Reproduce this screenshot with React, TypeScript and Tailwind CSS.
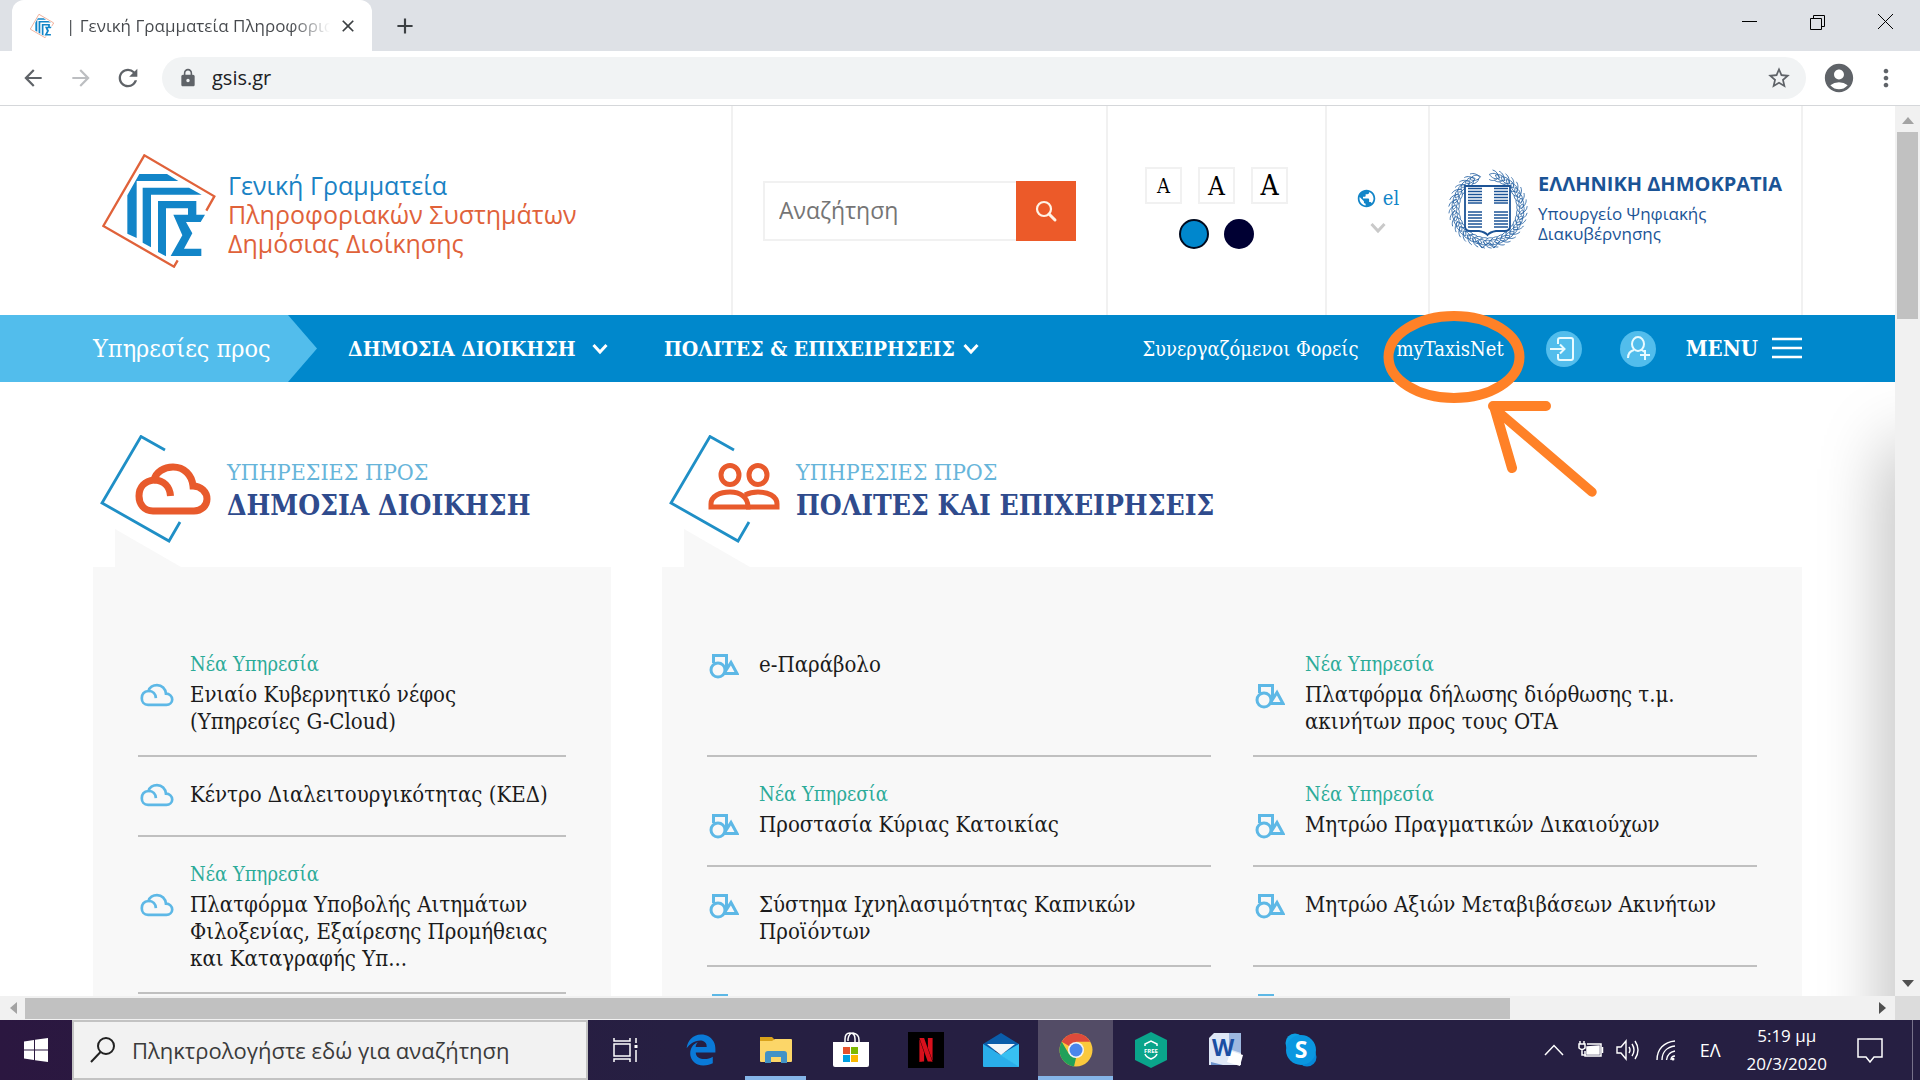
import type { ReactNode } from 'react';
import {
    MdAccountCircle,
    MdAdd,
    MdArrowBack,
    MdArrowForward,
    MdClose,
    MdLock,
    MdMoreVert,
    MdPublic,
    MdRefresh,
    MdStarBorder,
} from 'react-icons/md';
import { FaEdgeLegacy } from 'react-icons/fa6';
import { SiNetflix } from 'react-icons/si';

type Service = { title: string; isNew?: boolean };

const adminServices: Service[] = [
    { title: 'Ενιαίο Κυβερνητικό νέφος (Υπηρεσίες G-Cloud)', isNew: true },
    { title: 'Κέντρο Διαλειτουργικότητας (ΚΕΔ)' },
    { title: 'Πλατφόρμα Υποβολής Αιτημάτων Φιλοξενίας, Εξαίρεσης Προμήθειας και Καταγραφής Υπ...', isNew: true },
];

const citizenServices: Service[] = [
    { title: 'e-Παράβολο' },
    { title: 'Πλατφόρμα δήλωσης διόρθωσης τ.μ. ακινήτων προς τους ΟΤΑ', isNew: true },
    { title: 'Προστασία Κύριας Κατοικίας', isNew: true },
    { title: 'Μητρώο Πραγματικών Δικαιούχων', isNew: true },
    { title: 'Σύστημα Ιχνηλασιμότητας Καπνικών Προϊόντων' },
    { title: 'Μητρώο Αξιών Μεταβιβάσεων Ακινήτων' },
    { title: '' },
    { title: '' },
];

function GsisMark({ className }: { className: string }) {
    return (
        <svg viewBox="21 24 342 342" className={className} aria-hidden="true">
            <path d="M334 194 L358 151 L148 28 L25 240 L237 362 L248 343" fill="none" stroke="#e0623a" strokeWidth="7" />
            <g fill="#1285c8">
                <path d="M133 84 H216 L250 105 H125 V276 L97 263 V148 Z" />
                <path d="M143 125 H282 L320 146 H168 V304 L143 290 Z" />
                <path d="M189 165 H304 V206 H330 L317 228 H273 L292 262 L267 308 H319 V330 H227 L262 268 L235 206 H279 V187 H213 V331 L189 318 Z" />
            </g>
        </svg>
    );
}

function Emblem() {
    const leaves = Array.from({ length: 34 }, (_, i) => -78 + (i * 336) / 34 + 2);
    return (
        <svg viewBox="0 0 80 80" className="h-20 w-20 shrink-0" fill="none" stroke="#2c66a5" aria-hidden="true">
            <g strokeWidth="0.8">
                {leaves.map((a) => (
                    <g key={a} transform={`rotate(${a} 40 40)`}>
                        <path d="M73 44 C70 40 71 36 74 33 C77 37 77 41 73 44 Z" />
                        <path d="M73 43 C76 42 79 39 79 35 M72 42 C69 40 68 37 69 34" />
                    </g>
                ))}
            </g>
            <path d="M28 72 L34 79 L40 74 L46 79 L52 72" strokeWidth="1" />
            <path d="M17 17 H62 V57 Q62 62 57 62 H48 Q42 63 39.500 66 Q37 63 31 62 H22 Q17 62 17 57 Z" fill="#fff" stroke="#1d5496" strokeWidth="1.800" />
            <g stroke="#1d5496" strokeWidth="1.500">
                {[19.5, 22.5, 25.5, 28.5, 31.5, 34, 43, 46, 49, 52, 55, 58].map((y) => (
                    <path key={y} d={`M20 ${y} H34 M46 ${y} H60`} />
                ))}
            </g>
        </svg>
    );
}

function Chevron({ className }: { className: string }) {
    return (
        <svg viewBox="0 0 16 12" className={className} fill="none" stroke="currentColor" strokeWidth="3" aria-hidden="true">
            <path d="M1.500 2 L8 9 L14.500 2" />
        </svg>
    );
}

function CloudIcon({ className, strokeWidth }: { className: string; strokeWidth: number }) {
    return (
        <svg viewBox="0 0 76 52" className={className} fill="none" stroke="currentColor" strokeWidth={strokeWidth} aria-hidden="true">
            <path d="M18 48 C9 48 4 41 4 33 C4 24 10 18 19 17 C21 9 29 4 38 4 C49 4 57 12 58 23 C66 23 72 29 72 36 C72 43 66 48 59 48 Z" />
            <path d="M19 17 C29 17 35 24 35.500 33" />
        </svg>
    );
}

function ShapesIcon() {
    return (
        <svg viewBox="0 0 30 26" className="h-[26px] w-[30px]" fill="none" stroke="#5db8e6" strokeWidth="3" aria-hidden="true">
            <path d="M4.500 10 V2.500 H17.500 V16" />
            <path d="M15 20.500 L22 9.500 L28 20.500 Z" />
            <circle cx="9" cy="17" r="7" fill="#f8f8f8" />
        </svg>
    );
}

function PeopleIcon() {
    return (
        <svg viewBox="0 0 72 48" className="h-12 w-[72px]" fill="none" stroke="#e85a2c" strokeWidth="5" aria-hidden="true">
            <ellipse cx="22" cy="12" rx="9" ry="9.500" />
            <ellipse cx="50" cy="12" rx="9" ry="9.500" />
            <path d="M3 44 V41 C3 33 12 29 22 29 C32 29 40 34 40 44 Z" />
            <path d="M37 32 C41 30 45 29 50 29 C60 29 69 33 69 41 V44 H38" />
        </svg>
    );
}

function SectionHeading({ title, children }: { title: string; children: ReactNode }) {
    return (
        <div className="relative flex h-[132px] pl-2">
            <svg viewBox="0 0 120 132" className="absolute left-0 top-0 h-[132px] w-[120px]" fill="none" aria-hidden="true">
                <path d="M22 94 V132 H88 Z" fill="#f8f8f8" />
                <path d="M72 15 L48 1.500 L9 68 L76 106 L87 87" stroke="#1f8fc6" strokeWidth="2.800" />
            </svg>
            <div className="relative flex w-[126px] items-start justify-end pr-4 pt-7">{children}</div>
            <h2 className="pt-[22px] text-[#2f4b8d]">
                <span className="block text-[23px] font-light leading-[30px] text-[#67b5da]">ΥΠΗΡΕΣΙΕΣ ΠΡΟΣ</span>
                <span className="block text-[28px] font-bold leading-[38px]">{title}</span>
            </h2>
        </div>
    );
}

function ServiceRow({ service, icon }: { service: Service; icon: ReactNode }) {
    return (
        <li className="border-b-2 border-[#c0c0c0] pb-5 pt-6">
            <a href="#" className="block">
                {service.isNew && <span className="block pb-1 pl-[52px] text-[20px] leading-[26px] text-[#2cab98]">Νέα Υπηρεσία</span>}
                <span className="flex min-h-[34px]">
                    <span className="w-[52px] shrink-0 pl-0.5 pt-0.5">{icon}</span>
                    <span className="pr-2 leading-[27px]">{service.title}</span>
                </span>
            </a>
        </li>
    );
}

function BrowserChrome() {
    return (
        <header className="shrink-0 bg-white font-['Open_Sans',sans-serif]">
            <div className="flex h-[51px] bg-[#dee1e6] pl-3">
                <div className="flex w-[360px] items-center rounded-t-xl bg-white pl-[18px] pr-3.5">
                    <GsisMark className="h-6 w-6 shrink-0" />
                    <span className="ml-3 flex-1 overflow-hidden whitespace-nowrap bg-gradient-to-r from-[#45484c] from-85% to-white bg-clip-text text-[17px] text-transparent">
                        | Γενική Γραμματεία Πληροφορια
                    </span>
                    <button aria-label="Κλείσιμο καρτέλας" className="ml-2 text-[#3c4043]">
                        <MdClose size={20} />
                    </button>
                </div>
                <button aria-label="Νέα καρτέλα" className="ml-5 text-[#3c4043]">
                    <MdAdd size={26} />
                </button>
                <div className="ml-auto flex items-center gap-12 pb-2 pr-6 text-black">
                    <button aria-label="Ελαχιστοποίηση">
                        <svg viewBox="0 0 20 20" className="h-5 w-5" stroke="currentColor"><path d="M2 9.500 H17" /></svg>
                    </button>
                    <button aria-label="Επαναφορά">
                        <svg viewBox="0 0 20 20" className="h-5 w-5" fill="none" stroke="currentColor">
                            <path d="M2.500 6.500 H13.500 V17.500 H2.500 Z M5.500 6.500 V3.500 H16.500 V14.500 H13.500" />
                        </svg>
                    </button>
                    <button aria-label="Κλείσιμο">
                        <svg viewBox="0 0 20 20" className="h-5 w-5" stroke="currentColor"><path d="M2 2 L17 17 M17 2 L2 17" /></svg>
                    </button>
                </div>
            </div>
            <div className="flex h-[55px] items-center border-b border-[#d5d7da] pl-5 pr-5 text-[#5f6368]">
                <button aria-label="Πίσω"><MdArrowBack size={26} /></button>
                <button aria-label="Μπροστά" className="ml-[22px] text-[#bcbec1]"><MdArrowForward size={26} /></button>
                <button aria-label="Ανανέωση" className="ml-5"><MdRefresh size={28} /></button>
                <div className="ml-5 flex h-[42px] flex-1 items-center rounded-full bg-[#f1f3f4] pl-4 pr-3.5">
                    <MdLock size={20} />
                    <input aria-label="Διεύθυνση" defaultValue="gsis.gr" className="ml-3 flex-1 bg-transparent pl-0.5 text-xl text-[#202124] outline-none" />
                    <button aria-label="Σελιδοδείκτης"><MdStarBorder size={26} /></button>
                </div>
                <button aria-label="Προφίλ" className="ml-4"><MdAccountCircle size={34} /></button>
                <button aria-label="Μενού" className="ml-4"><MdMoreVert size={28} /></button>
            </div>
        </header>
    );
}

function SiteHeader() {
    return (
        <div className="mr-[92px] flex h-[209px] border-r-2 border-[#f1f1f1]">
            <a href="#" className="flex flex-1 items-center pl-[102px] font-['Open_Sans',sans-serif] text-[25px] leading-[29px] text-[#e0623a]">
                <GsisMark className="h-[114px] w-[114px] shrink-0" />
                <span className="pl-3 pt-2">
                    <span className="block text-[#1a82c4]">Γενική Γραμματεία</span>
                    <span className="block whitespace-nowrap">Πληροφοριακών Συστημάτων</span>
                    <span className="block">Δημόσιας Διοίκησης</span>
                </span>
            </a>
            <div className="flex w-[375px] items-center border-l-2 border-[#f1f1f1] pl-[30px] pr-[30px]">
                <form className="flex h-[60px] w-full" onSubmit={(e) => e.preventDefault()}>
                    <input
                        aria-label="Αναζήτηση"
                        placeholder="Αναζήτηση"
                        className="min-w-0 flex-1 border-2 border-r-0 border-[#f1f1f1] pl-3.5 font-['Open_Sans',sans-serif] text-[23px] outline-none placeholder:text-[#757575]"
                    />
                    <button aria-label="Αναζήτηση" className="flex w-[60px] items-center justify-center bg-[#ec5a29] text-[#fff3e6]">
                        <svg viewBox="0 0 24 24" className="h-6 w-6" fill="none" stroke="currentColor" strokeWidth="2.200">
                            <circle cx="10" cy="10" r="7" />
                            <path d="M15 15 L21 21" strokeWidth="3" strokeLinecap="round" />
                        </svg>
                    </button>
                </form>
            </div>
            <div className="flex w-[219px] flex-col items-center border-l-2 border-[#f1f1f1] pt-[61px] text-black">
                <div className="flex gap-4">
                    <button className="h-[37px] w-[37px] border-2 border-[#f1f1f1] text-xl leading-8">A</button>
                    <button className="h-[37px] w-[37px] border-2 border-[#f1f1f1] text-[26px] leading-8">A</button>
                    <button className="h-[37px] w-[37px] border-2 border-[#f1f1f1] text-[28px] leading-8">A</button>
                </div>
                <div className="mt-[15px] flex gap-[15px]">
                    <button aria-label="Κανονικά χρώματα" className="h-[30px] w-[30px] rounded-full border-2 border-[#000a1e] bg-[#0087cd]" />
                    <button aria-label="Υψηλή αντίθεση" className="h-[30px] w-[30px] rounded-full bg-[#000033]" />
                </div>
            </div>
            <button className="flex w-[103px] flex-col items-center border-l-2 border-[#f1f1f1] pt-[78px] text-xl leading-7 text-[#1285c8]">
                <span className="flex items-center gap-1.5"><MdPublic size={21} />el</span>
                <Chevron className="mt-2.5 h-3 w-4 text-[#c9c9c9]" />
            </button>
            <a href="#" className="flex w-[373px] items-center border-l-2 border-[#f1f1f1] pb-1 pl-[18px] font-['Open_Sans',sans-serif] text-[#1b5496]">
                <Emblem />
                <span className="whitespace-nowrap pl-2.5 text-[17px] leading-5">
                    <span className="block pb-2.5 text-[20px] font-bold">ΕΛΛΗΝΙΚΗ ΔΗΜΟΚΡΑΤΙΑ</span>
                    <span className="block">Υπουργείο Ψηφιακής</span>
                    <span className="block">Διακυβέρνησης</span>
                </span>
            </a>
        </div>
    );
}

function NavBar() {
    return (
        <nav className="relative z-10 flex h-[67px] items-center whitespace-nowrap bg-[#0088cc] pr-[93px] text-white">
            <span className="flex h-full w-[288px] shrink-0 items-center bg-[#52bdec] pl-[93px] text-[25px] font-light">Υπηρεσίες προς</span>
            <svg viewBox="0 0 29 67" className="h-[67px] w-[29px] shrink-0" aria-hidden="true">
                <path d="M0 0 L29 33.500 L0 67 Z" fill="#52bdec" />
            </svg>
            <button className="ml-[31px] flex w-[260px] shrink-0 items-center justify-between text-[21px] font-bold">
                ΔΗΜΟΣΙΑ ΔΙΟΙΚΗΣΗ
                <Chevron className="h-3 w-4" />
            </button>
            <button className="ml-14 flex w-[315px] shrink-0 items-center justify-between text-[21px] font-bold">
                ΠΟΛΙΤΕΣ &amp; ΕΠΙΧΕΙΡΗΣΕΙΣ
                <Chevron className="h-3 w-4" />
            </button>
            <div className="ml-auto flex items-center text-xl">
                <a href="#">Συνεργαζόμενοι Φορείς</a>
                <a href="#" className="relative ml-[38px]">
                    myTaxisNet
                    <svg viewBox="0 0 220 192" className="pointer-events-none absolute -left-4 -top-[26px] h-[192px] w-[220px]" fill="none" stroke="#ff8127" strokeLinecap="round" aria-hidden="true">
                        <ellipse cx="73" cy="48" rx="65.500" ry="41" strokeWidth="10" />
                        <path d="M112 97 H165 M113 97 L131 159" strokeWidth="10" />
                        <path d="M114 100 L211 183" strokeWidth="9.500" />
                    </svg>
                </a>
                <button aria-label="Σύνδεση" className="ml-[42px]">
                    <svg viewBox="0 0 36 36" className="h-9 w-9" fill="none" stroke="#e9fbff" strokeWidth="2">
                        <circle cx="18" cy="18" r="18" fill="#52bdec" stroke="none" />
                        <path d="M12 13 V9 Q12 7 14 7 H25 Q27 7 27 9 V27 Q27 29 25 29 H14 Q12 29 12 27 V23 M4 18 H18 M14 13.500 L18.500 18 L14 22.500" />
                    </svg>
                </button>
                <button aria-label="Εγγραφή" className="ml-[38px]">
                    <svg viewBox="0 0 36 36" className="h-9 w-9" fill="none" stroke="#e9fbff" strokeWidth="2">
                        <circle cx="18" cy="18" r="18" fill="#52bdec" stroke="none" />
                        <path d="M8 27 C8 22 10 20 14 19 M21 19 Q23 19 24 21 M25 19 V29 M20 24 H30" />
                        <ellipse cx="18" cy="13" rx="6" ry="7" />
                    </svg>
                </button>
                <button className="ml-[30px] flex items-center gap-3.5 text-[22px] font-bold">
                    MENU
                    <svg viewBox="0 0 30 22" className="h-[22px] w-[30px]" stroke="currentColor" strokeWidth="2.600">
                        <path d="M0 2 H30 M0 11 H30 M0 20 H30" />
                    </svg>
                </button>
            </div>
        </nav>
    );
}

function TaskIcon({ label, active, open, children }: { label: string; active?: boolean; open?: boolean; children: ReactNode }) {
    return (
        <button
            aria-label={label}
            className={`relative flex h-full w-[75px] items-center justify-center ${active ? 'border-b-4 border-[#85b5e8] bg-[#534c66] pt-1' : ''}`}
        >
            {children}
            {open && <span className="absolute inset-x-[7px] bottom-0 h-1 bg-[#85b5e8]" />}
        </button>
    );
}

function Taskbar() {
    return (
        <footer className="flex h-[60px] shrink-0 items-stretch bg-gradient-to-r from-[#2b1740] via-[#261f42] via-35% to-[#261f42] font-['Open_Sans',sans-serif] text-white">
            <button aria-label="Έναρξη" className="flex w-[72px] items-center justify-center">
                <svg viewBox="0 0 24 24" className="h-6 w-6" fill="#fff">
                    <path d="M0 3.500 L10 2 V11.400 H0 Z M11 1.800 L24 0 V11.400 H11 Z M0 12.600 H10 V22 L0 20.500 Z M11 12.600 H24 V24 L11 22.200 Z" />
                </svg>
            </button>
            <label className="flex w-[516px] items-center border-2 border-[#c3c3c3] bg-[#f2f2f2] pl-4">
                <svg viewBox="0 0 26 26" className="h-[26px] w-[26px]" fill="none" stroke="#222" strokeWidth="2">
                    <circle cx="16" cy="9" r="8" />
                    <path d="M10.500 15 L1 25" />
                </svg>
                <input aria-label="Αναζήτηση στα Windows" placeholder="Πληκτρολογήστε εδώ για αναζήτηση" className="ml-4 flex-1 bg-transparent text-[22px] outline-none placeholder:text-[#3b3b3b]" />
            </label>
            <TaskIcon label="Προβολή εργασιών">
                <svg viewBox="0 0 26 26" className="h-[26px] w-[26px]" fill="none" stroke="#fff" strokeWidth="1.500">
                    <path d="M1 7 H17 V19 H1 Z M1 1 V4 H17 V1 M1 25 V22 H17 V25 M23 1 V6 M23 13 V25" />
                    <path d="M23 8 V11" strokeWidth="3" />
                </svg>
            </TaskIcon>
            <TaskIcon label="Edge"><FaEdgeLegacy size={32} color="#0a7ad8" /></TaskIcon>
            <TaskIcon label="Εξερεύνηση αρχείων" open>
                <svg viewBox="0 0 32 28" className="h-7 w-8">
                    <path d="M0 1 H12 L15 4 V8 H0 Z" fill="#d9a21b" />
                    <path d="M0 5 H12 L15 3 H31 Q32 3 32 4 V25 Q32 26 31 26 H1 Q0 26 0 25 Z" fill="#fcd668" />
                    <path d="M5 27 V18 Q5 15 8 15 H24 Q27 15 27 18 V27 H21 V21 H11 V27 Z" fill="#4292c6" />
                </svg>
            </TaskIcon>
            <TaskIcon label="Microsoft Store">
                <svg viewBox="0 0 36 36" className="h-9 w-9">
                    <path d="M12 11 V7 Q12 1 17 1 Q22 1 22 7 V11 M15 9 V7 Q16 1 20 1 Q26 2 26 8 V10" fill="none" stroke="#fff" strokeWidth="1.500" />
                    <path d="M0 10 H36 V33 Q36 35 34 35 H2 Q0 35 0 33 Z" fill="#fff" />
                    <path d="M10 15 H17 V22 H10 Z" fill="#e5512b" />
                    <path d="M18 15 H25 V22 H18 Z" fill="#7db900" />
                    <path d="M10 23 H17 V30 H10 Z" fill="#009fe0" />
                    <path d="M18 23 H25 V30 H18 Z" fill="#fcb900" />
                </svg>
            </TaskIcon>
            <TaskIcon label="Netflix">
                <span className="flex h-9 w-9 items-center justify-center bg-black"><SiNetflix size={24} color="#d8101c" /></span>
            </TaskIcon>
            <TaskIcon label="Αλληλογραφία">
                <svg viewBox="0 0 36 34" className="h-[34px] w-9">
                    <path d="M0 11 L18 0 L36 11 V18 H0 Z" fill="#0a5dab" />
                    <path d="M0 11 L36 33 Q36 34 35 34 H1 Q0 34 0 33 Z" fill="#2aaeea" />
                    <path d="M36 11 L17 22 L36 34 Z" fill="#37c0f2" />
                    <path d="M4 11 H32 L18 22 Z" fill="#f2f6fa" />
                </svg>
            </TaskIcon>
            <TaskIcon label="Chrome" active>
                <svg viewBox="0 0 34 34" className="h-[34px] w-[34px]">
                    <circle cx="17" cy="17" r="16.500" fill="#fbc93d" />
                    <path d="M17 17 L2.700 8.800 A16.500 16.500 0 0 1 31.300 8.800 H17 Z" fill="#de4b3b" />
                    <path d="M2.700 8.800 L10 21 L17 25 L15 33.400 A16.500 16.500 0 0 1 2.700 8.800 Z" fill="#21a05a" />
                    <circle cx="17" cy="17" r="8" fill="#f5f5f5" />
                    <circle cx="17" cy="17" r="6.500" fill="#4a86ec" />
                </svg>
            </TaskIcon>
            <TaskIcon label="Kaspersky">
                <svg viewBox="0 0 32 36" className="h-9 w-8">
                    <path d="M16 0 L32 8 V28 L16 36 L0 28 V8 Z" fill="#0aa58b" />
                    <path d="M10 14 V12 L16 9 L22 12 V14 M10 22 Q11 25 16 27 Q21 25 22 22" fill="none" stroke="#fff" strokeWidth="1.500" />
                    <text x="16" y="20.500" textAnchor="middle" fontSize="6" fontWeight="700" fill="#fff">FREE</text>
                </svg>
            </TaskIcon>
            <TaskIcon label="Word">
                <svg viewBox="0 0 34 34" className="h-[34px] w-[34px]">
                    <path d="M5 0 H32 V32 H0 V5 Z" fill="#dfe8f6" />
                    <path d="M20 0 H32 V20 L20 16 Z" fill="#9db8e0" />
                    <path d="M22 18 L34 22 L31 33 L18 29 Z" fill="#fff" />
                    <path d="M2 29 L14 32 H2 Z" fill="#6d93cc" />
                    <text x="14" y="23" textAnchor="middle" fontSize="23" fontWeight="700" fill="#1b4fa3">W</text>
                </svg>
            </TaskIcon>
            <TaskIcon label="Skype">
                <svg viewBox="0 0 32 34" className="h-[34px] w-8">
                    <circle cx="10" cy="10" r="9.500" fill="#0d9fe3" />
                    <circle cx="22" cy="24" r="9.500" fill="#0688d8" />
                    <circle cx="16" cy="17" r="15" fill="#0a97e0" />
                    <text x="16" y="25" textAnchor="middle" fontSize="23" fontWeight="700" fill="#fff">S</text>
                </svg>
            </TaskIcon>
            <div className="ml-auto flex items-center">
                <svg viewBox="0 0 20 12" className="h-3 w-5" fill="none" stroke="#fff" strokeWidth="1.500"><path d="M1 11 L10 1.500 L19 11" /></svg>
                <svg viewBox="0 0 26 20" className="ml-3.5 h-5 w-[26px]" fill="none" stroke="#fff" strokeWidth="1.500">
                    <path d="M2 1 V4 M6 1 V4 M1 4 H7 V8 Q4 11 1 8 Z M4 9 V15 H8" />
                    <path d="M9 4 H23 V16 H7 V11" />
                    <path d="M9 7 L21 6 V14 H9 Z" fill="#fff" />
                    <path d="M24.500 7 V13" />
                </svg>
                <svg viewBox="0 0 24 22" className="ml-3 h-[22px] w-6" fill="none" stroke="#fff" strokeWidth="1.400">
                    <path d="M1 8 H5 L10 2 V20 L5 14 H1 Z M13 8 Q15 11 13 14 M16 5 Q20 11 16 17 M19 2 Q25 11 19 20" />
                </svg>
                <svg viewBox="0 0 20 22" className="ml-4 h-[22px] w-5" fill="none" stroke="#fff" strokeWidth="1.400">
                    <path d="M1 21 C1 10 8 3 19 2 M6 21 C6 13 11 8 19 7 M10.500 21 C11 16 14 13 19 12" />
                    <path d="M15 21 C15 18 17 17 19 17" />
                    <circle cx="17" cy="20" r="1.500" fill="#fff" stroke="none" />
                </svg>
                <span className="ml-6 text-lg">ΕΛ</span>
                <div className="ml-[26px] text-center text-[17px] leading-[28px]">
                    <div>5:19 μμ</div>
                    <div>20/3/2020</div>
                </div>
                <button aria-label="Ειδοποιήσεις" className="ml-[30px]">
                    <svg viewBox="0 0 26 26" className="h-[26px] w-[26px]" fill="none" stroke="#fff" strokeWidth="1.500">
                        <path d="M1 2 H25 V20 H17 L13 25 L9 20 H1 Z" />
                    </svg>
                </button>
                <span className="ml-[29px] mr-[7px] h-[60px] w-px bg-[#77728a]" />
            </div>
        </footer>
    );
}

export default function App() {
    return (
        <div className="flex h-screen flex-col overflow-hidden bg-white">
            <BrowserChrome />
            <div className="flex min-h-0 flex-1">
                <div className="relative min-w-0 flex-1 overflow-hidden font-['DejaVu_Serif_Condensed','DejaVu_Serif',serif] text-[#1b1b1b]">
                    <SiteHeader />
                    <NavBar />
                    <main className="grid grid-cols-[518fr_1140fr] gap-[51px] px-[93px] pt-[53px] text-[22px]">
                        <section>
                            <SectionHeading title="ΔΗΜΟΣΙΑ ΔΙΟΙΚΗΣΗ">
                                <CloudIcon className="h-[52px] w-[76px] text-[#e85a2c]" strokeWidth={7} />
                            </SectionHeading>
                            <ul className="bg-[#f8f8f8] px-[45px] pb-10 pt-[60px]">
                                {adminServices.map((s) => (
                                    <ServiceRow key={s.title} service={s} icon={<CloudIcon className="h-6 w-[34px] text-[#5db8e6]" strokeWidth={6} />} />
                                ))}
                            </ul>
                        </section>
                        <section>
                            <SectionHeading title="ΠΟΛΙΤΕΣ ΚΑΙ ΕΠΙΧΕΙΡΗΣΕΙΣ">
                                <PeopleIcon />
                            </SectionHeading>
                            <ul className="grid grid-cols-2 gap-x-[42px] bg-[#f8f8f8] px-[45px] pt-[60px]">
                                {citizenServices.map((s, i) => (
                                    <ServiceRow key={i} service={s} icon={<ShapesIcon />} />
                                ))}
                            </ul>
                        </section>
                    </main>
                    <div className="absolute -bottom-20 -right-10 top-[340px] w-10 shadow-[0_0_70px_rgba(0,0,0,0.4)]" />
                </div>
                <div className="flex w-[25px] shrink-0 flex-col items-center bg-[#f1f1f1]">
                    <svg viewBox="0 0 12 8" className="mb-2 mt-2.5 h-2 w-3"><path d="M0 8 L6 1 L12 8 Z" fill="#a3a3a3" /></svg>
                    <div className="h-[187px] w-[21px] bg-[#c1c1c1]" />
                    <svg viewBox="0 0 12 8" className="mb-2 mt-auto h-2 w-3"><path d="M0 0 L6 7 L12 0 Z" fill="#505050" /></svg>
                </div>
            </div>
            <div className="flex h-6 shrink-0 items-center bg-[#f1f1f1]">
                <span className="flex w-[25px] justify-center">
                    <svg viewBox="0 0 8 12" className="h-3 w-2"><path d="M8 0 L1 6 L8 12 Z" fill="#a3a3a3" /></svg>
                </span>
                <div className="h-[21px] w-[1485px] bg-[#c1c1c1]" />
                <svg viewBox="0 0 8 12" className="ml-auto mr-2 h-3 w-2"><path d="M0 0 L7 6 L0 12 Z" fill="#505050" /></svg>
                <span className="h-6 w-[25px] bg-[#dcdcdc]" />
            </div>
            <Taskbar />
        </div>
    );
}
